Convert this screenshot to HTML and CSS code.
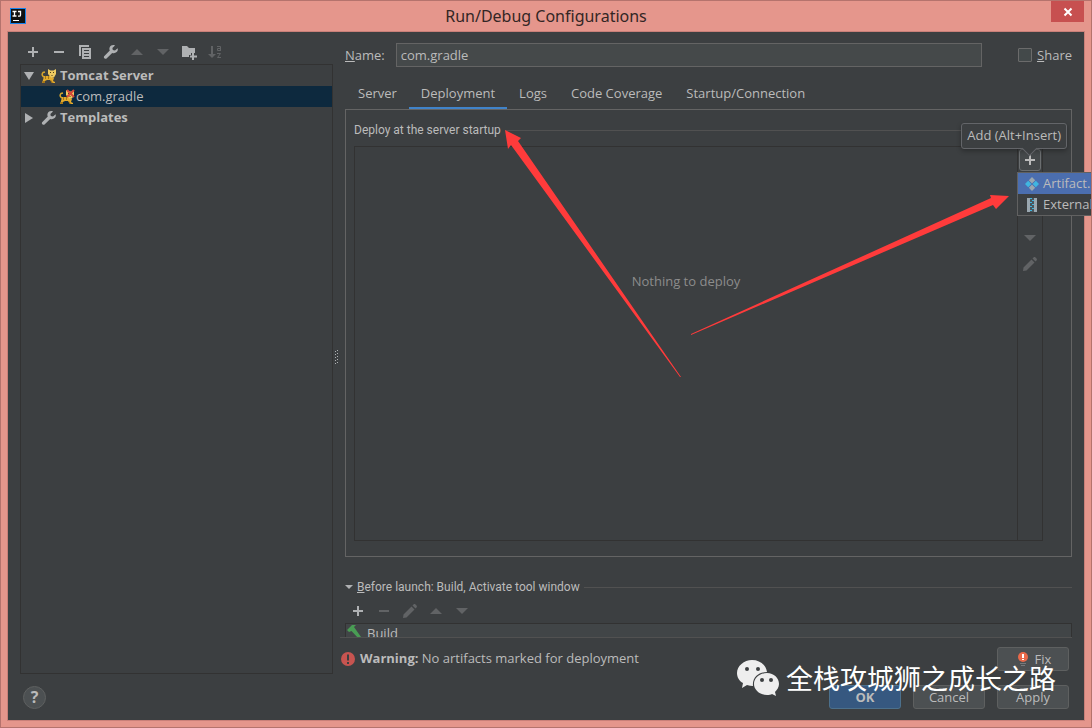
FILE: index.html
```html
<!DOCTYPE html>
<html lang="en">
<head>
    <meta charset="UTF-8">
    <meta name="viewport" content="width=device-width, initial-scale=1.0">
    <title>Run/Debug Configurations</title>
    <link rel="stylesheet" href="styles.css">
</head>
<body>
    <svg class="sprite" aria-hidden="true">
        <symbol id="i-plus" viewBox="0 0 16 16"><path d="M7 3h2v4h4v2H9v4H7V9H3V7h4z"/></symbol>
        <symbol id="i-minus" viewBox="0 0 16 16"><path d="M3 7h10v2H3z"/></symbol>
        <symbol id="i-copy" viewBox="0 0 16 16"><path d="M2 1h10v2H4v9H2z"/><path fill-rule="evenodd" d="M5 4h9v11H5zM7 6v1h5V6zM7 9v1h5V9zM7 12v1h5v-1z"/></symbol>
        <symbol id="i-wrench" viewBox="0 0 16 16"><path d="M14.6 4.2 12 6.6l-2.2-.5-.4-2.1L12 1.4C10 .6 7.600 1.200 6.700 3.200c-.5 1.200-.4 2.400.1 3.400L1.400 12c-.7.7-.7 1.600 0 2.300.7.700 1.700.700 2.400 0l5.400-5.400c1.400.6 3.200.4 4.400-.8 1.200-1.100 1.500-2.600 1-3.900z"/></symbol>
        <symbol id="i-up" viewBox="0 0 16 16"><path d="M2 11 8 5l6 6z"/></symbol>
        <symbol id="i-down" viewBox="0 0 16 16"><path d="M2 5h12l-6 6z"/></symbol>
        <symbol id="i-folder" viewBox="0 0 16 16"><path d="M1 2h5l2 2h6v5h-4v2H8v2H1z"/><path d="M11 9h2v2.500h3v2h-3V16h-2v-2.500H9v-2h2z"/></symbol>
        <symbol id="i-sort" viewBox="0 0 16 16"><path d="M4 2h2v8h3l-4 4-4-4h3z"/><path fill="none" stroke="currentColor" d="M10 2.500h3.500V7M13.500 4.500h-3v2h3M10 9.500h3.500L10.500 13.500H14"/></symbol>
        <symbol id="i-pencil" viewBox="0 0 16 16"><path d="m1 15 .5-3.500 8-8 3 3-8 8zM10.500 2.500l1-1c.6-.6 1.400-.6 2 0l1 1c.6.6.6 1.400 0 2l-1 1z"/></symbol>
        <symbol id="i-cat" viewBox="0 0 16 16">
            <path fill="none" stroke="#d9a62c" stroke-width="1.500" d="M4 9C1 9 .5 6 2 4.500L4 4"/>
            <path fill="#e3ab2d" d="M3 8h6l4 2-1 3 2 1v1h-3l-2-3H6l-2 1-1 2H1l1-3z"/>
            <path fill="#a87716" d="M4 8h1v3H4zM7 8h1v3H7zM2 13h2v2H1zM10 12l2 3h-1l-2-3z"/>
            <path fill="#efca62" d="m7 1 2.500 1.500h3L15 1v5l-2 3.500h-3L7 6z"/>
            <path fill="#51401b" d="M9 4h1v1H9zM12 4h1v1h-1zM10.500 7h1v1h-1z"/>
        </symbol>
    </svg>

    <header class="titlebar">
        <svg class="app-logo" viewBox="0 0 16 16" aria-hidden="true">
            <path fill="#1783ec" d="M0 0h16v16H0z"/><path fill="#111" d="M1 1h14v14H1z"/>
            <path fill="none" stroke="#fff" stroke-width="1.300" d="M2.500 3.500h4M4.500 3v5M2.500 8h4M8 3.500h2.500V7c0 .8-.5 1.200-1.200 1.200H8"/>
            <path fill="#fff" d="M3 12h6v1H3z"/>
        </svg>
        <h1>Run/Debug Configurations</h1>
        <button class="close" aria-label="Close"><svg viewBox="0 0 10 10"><path d="m1.500 1.500 7 7m0-7-7 7"/></svg></button>
    </header>

    <main class="dialog">
        <div class="panes">
            <aside class="sidebar">
                <div class="toolbar">
                    <button aria-label="Add configuration"><svg class="icon"><use href="#i-plus"/></svg></button>
                    <button aria-label="Remove configuration"><svg class="icon"><use href="#i-minus"/></svg></button>
                    <button aria-label="Copy configuration"><svg class="icon"><use href="#i-copy"/></svg></button>
                    <button aria-label="Edit templates"><svg class="icon"><use href="#i-wrench"/></svg></button>
                    <button aria-label="Move up" disabled><svg class="icon"><use href="#i-up"/></svg></button>
                    <button aria-label="Move down" disabled><svg class="icon"><use href="#i-down"/></svg></button>
                    <button aria-label="Create folder"><svg class="icon"><use href="#i-folder"/></svg></button>
                    <button aria-label="Sort" disabled><svg class="icon"><use href="#i-sort"/></svg></button>
                </div>
                <ul class="tree">
                    <li class="node group">
                        <svg class="twisty" viewBox="0 0 10 10"><path d="M0 1h10L5 9z"/></svg>
                        <svg class="icon"><use href="#i-cat"/></svg>
                        <span>Tomcat Server</span>
                    </li>
                    <li class="node child selected">
                        <svg class="icon" viewBox="0 0 16 16"><use href="#i-cat"/><path fill="none" stroke="#d44a3a" stroke-width="2" d="m8 1 7 7m0-7L8 8"/></svg>
                        <span>com.gradle</span>
                    </li>
                    <li class="node group">
                        <svg class="twisty" viewBox="0 0 10 10"><path d="M1 0v10l8-5z"/></svg>
                        <svg class="icon"><use href="#i-wrench"/></svg>
                        <span>Templates</span>
                    </li>
                </ul>
            </aside>

            <div class="splitter"><svg viewBox="0 0 4 16"><path d="M0 1h1v1H0zM2 0h1v1H2zM0 4h1v1H0zM2 3h1v1H2zM0 7h1v1H0zM2 6h1v1H2zM0 10h1v1H0zM2 9h1v1H2zM0 13h1v1H0zM2 12h1v1H2z"/></svg></div>

            <section class="editor">
                <div class="name-row">
                    <label for="name"><u>N</u>ame:</label>
                    <input type="text" id="name" value="com.gradle">
                    <label class="share"><input type="checkbox"><span><u>S</u>hare</span></label>
                </div>

                <nav class="tabs">
                    <button>Server</button>
                    <button class="active">Deployment</button>
                    <button>Logs</button>
                    <button>Code Coverage</button>
                    <button>Startup/Connection</button>
                </nav>

                <div class="tab-page">
                    <h2 class="section-title">Deploy at the server startup</h2>
                    <div class="deploy">
                        <p class="empty">Nothing to deploy</p>
                        <div class="deploy-tools">
                            <div class="add">
                                <button class="add-button" aria-label="Add"><svg class="icon"><use href="#i-plus"/></svg></button>
                                <div class="tooltip" role="tooltip">Add (Alt+Insert)</div>
                                <div class="menu">
                                    <button class="current"><svg class="icon" viewBox="0 0 16 16"><path fill="#9aa7b0" d="m8 1 3.200 3.200L8 7.400 4.800 4.200zM8 8.600l3.200 3.200L8 15l-3.200-3.200z"/><path fill="#40b6e0" d="m4.200 4.800 3.200 3.200-3.200 3.200L1 8zM11.800 4.800 15 8l-3.200 3.200L8.600 8z"/></svg>Artifact...</button>
                                    <button><svg class="icon" viewBox="0 0 16 16"><path fill="#9aa7b0" d="M3 1h3v14H3zM10 1h3v14h-3z"/><path fill="#4a565d" d="M6 1h4v14H6z"/><path fill="#40b6e0" d="M6 1h2v1H6zM8 3h2v1H8zM6 5h2v1H6zM8 7h2v1H8zM6 9h2v1H6zM8 11h2v1H8zM6 13h2v1H6z"/></svg>External</button>
                                </div>
                            </div>
                            <button aria-label="Move down" disabled><svg class="icon"><use href="#i-down"/></svg></button>
                            <button aria-label="Edit" disabled><svg class="icon"><use href="#i-pencil"/></svg></button>
                        </div>
                    </div>
                </div>

                <div class="before-launch">
                    <h2 class="section-title"><svg class="fold" viewBox="0 0 8 6"><path d="M0 1h8L4 5z"/></svg><span><u>B</u>efore launch: Build, Activate tool window</span></h2>
                    <div class="toolbar">
                        <button aria-label="Add task"><svg class="icon"><use href="#i-plus"/></svg></button>
                        <button aria-label="Remove task" disabled><svg class="icon"><use href="#i-minus"/></svg></button>
                        <button aria-label="Edit task" disabled><svg class="icon"><use href="#i-pencil"/></svg></button>
                        <button aria-label="Move task up" disabled><svg class="icon"><use href="#i-up"/></svg></button>
                        <button aria-label="Move task down" disabled><svg class="icon"><use href="#i-down"/></svg></button>
                    </div>
                    <div class="tasks">
                        <svg class="icon" viewBox="0 0 16 16"><path fill="#499c54" d="M1 6 6 1h4L8 3l7 10-2 2-7.500-8L3 8z"/></svg>
                        <span>Build</span>
                    </div>
                </div>

                <div class="status">
                    <svg class="icon" viewBox="0 0 16 16"><circle cx="8" cy="8" r="7" fill="#c75450"/><path fill="#3c3f41" d="M7 3.500h2v6H7zM7 11h2v2H7z"/></svg>
                    <p><b>Warning:</b> No artifacts marked for deployment</p>
                    <button class="btn fix"><svg class="icon" viewBox="0 0 16 16"><circle cx="8" cy="6" r="5" fill="#e8694a"/><path fill="#fff" d="M7 3h2v4H7zM7 8h2v1H7z"/><path fill="#777a7c" d="M5 12h6v1H5zM6 14h4v1H6z"/></svg>Fix</button>
                </div>
            </section>
        </div>

        <footer class="actions">
            <button class="help" aria-label="Help">?</button>
            <button class="btn primary">OK</button>
            <button class="btn">Cancel</button>
            <button class="btn">Apply</button>
        </footer>
    </main>

    <svg class="arrows" viewBox="0 0 1092 728" aria-hidden="true">
        <path d="M505 130 521 138 518 141 681 377 680 377 511 145 508 149z"/>
        <path d="m1009 196-13 13-3-4-302 130v-1l300-136-1-3z"/>
    </svg>

    <div class="watermark">
        <svg viewBox="0 0 42 36" aria-hidden="true">
            <path fill="#eee" fill-rule="evenodd" d="M15 0C7 0 0 6 0 13c0 4 2 8 6 10l-1 5 5-3c2 .6 4 1 6 1C15 17 22 12 30 12 29 5 23 0 15 0zM10 7a2 2 0 1 1 0 4 2 2 0 0 1 0-4zM21 7a2 2 0 1 1 0 4 2 2 0 0 1 0-4z"/>
            <path fill="#eee" fill-rule="evenodd" d="M30 13c-7 0-13 5-13 11s6 11 13 11c2 0 4-.4 5-1l4 2-1-4c2-2 4-5 4-8 0-6-5-11-12-11zM25 18a2 2 0 1 1 0 4 2 2 0 0 1 0-4zM34 18a2 2 0 1 1 0 4 2 2 0 0 1 0-4z"/>
        </svg>
        <span lang="zh-CN">全栈攻城狮之成长之路</span>
    </div>
</body>
</html>
```

FILE: styles.css
```css
* {
    box-sizing: border-box;
}

body {
    margin: 0;
    height: 100vh;
    display: flex;
    flex-direction: column;
    position: relative;
    overflow: hidden;
    padding: 0 7px 7px;
    border: 1px solid #b5736d;
    background: #e5968c;
    color: #bbbbbb;
    font-family: "Open Sans", "Noto Sans CJK SC", sans-serif;
    font-size: 13px;
    line-height: 20px;
}

h1, h2, p, ul {
    margin: 0;
    padding: 0;
    font-weight: normal;
}

button, input {
    font: inherit;
    color: inherit;
}

button {
    padding: 0;
    border: none;
    background: none;
}

.sprite {
    position: absolute;
    width: 0;
    height: 0;
}

.icon {
    display: block;
    flex: none;
    width: 16px;
    height: 16px;
    fill: currentColor;
}

/* title bar */
.titlebar {
    flex: none;
    display: grid;
    grid-template-columns: 48px 1fr 48px;
    height: 31px;
    color: #332625;
}

.app-logo {
    width: 16px;
    margin: 7px 2px;
}

.titlebar h1 {
    font-family: "Noto Sans", sans-serif;
    font-size: 16px;
    line-height: 30px;
    text-align: center;
}

.close {
    display: flex;
    align-items: center;
    justify-content: center;
    width: 33px;
    height: 21px;
    justify-self: end;
    background: #c75050;
}

.close svg {
    width: 10px;
    fill: none;
    stroke: #fff;
    stroke-width: 2;
}

.dialog {
    flex: 1;
    min-height: 0;
    display: flex;
    flex-direction: column;
    padding: 10px 12px;
    background: #3c3f41;
    box-shadow: 0 0 0 1px #c98079;
}

.panes {
    flex: 1;
    min-height: 0;
    display: flex;
}

.toolbar {
    display: flex;
    gap: 10px;
    color: #afb1b3;
}

button:disabled {
    color: #616365;
}

/* configuration tree */
.sidebar {
    flex: none;
    width: 313px;
    display: flex;
    flex-direction: column;
    padding-bottom: 6px;
}

.sidebar .toolbar {
    padding: 2px 5px 4px;
}

.tree {
    flex: 1;
    border: 1px solid #323232;
    list-style: none;
}

.node {
    display: flex;
    align-items: center;
    height: 21px;
    padding-left: 3px;
    line-height: 18px;
}

.node span {
    padding-bottom: 2px;
}

.node .icon {
    color: #afb1b3;
}

.group {
    gap: 3px;
    font-weight: bold;
}

.twisty {
    width: 10px;
    height: 10px;
    margin-right: 4px;
    fill: #afb1b3;
}

.child {
    gap: 1px;
    padding-left: 38px;
}

.selected {
    background: #0d293e;
}

.splitter {
    flex: none;
    display: flex;
    align-items: center;
    justify-content: flex-start;
    width: 12px;
    padding: 0 2px 6px;
}

.splitter svg {
    width: 4px;
    height: 16px;
    fill: #afb1b3;
}

/* editor */
.editor {
    flex: 1;
    min-width: 0;
    display: flex;
    flex-direction: column;
}

.name-row {
    display: flex;
    align-items: center;
    padding-top: 1px;
}

.name-row > input {
    flex: 1;
    min-width: 0;
    height: 24px;
    margin: 0 36px 0 11px;
    padding: 0 4px;
    border: 1px solid #646464;
    background: #45494a;
}

.share {
    display: flex;
    align-items: center;
    gap: 5px;
}

.share input {
    appearance: none;
    width: 14px;
    height: 14px;
    margin: 0;
    border: 1px solid #6b6b6b;
    border-radius: 1px;
    background: #43494a;
}

.tabs {
    display: flex;
    padding: 10px 1px 0;
}

.tabs button {
    height: 32px;
    padding: 2px 12px 0;
    border-bottom: 2px solid transparent;
}

.tabs .active {
    border-bottom-color: #4083c9;
}

.tab-page {
    flex: 1;
    display: flex;
    flex-direction: column;
    padding: 10px 28px 15px 8px;
    border: 1px solid #646464;
}

.section-title {
    display: flex;
    align-items: center;
    gap: 4px;
    font-family: Roboto, sans-serif;
    font-size: 12px;
    line-height: 20px;
}

.section-title::after {
    content: "";
    flex: 1;
    height: 1px;
    background: #515151;
}

.tab-page .section-title {
    margin-right: -20px;
}

.deploy {
    flex: 1;
    display: flex;
    margin-top: 6px;
    border: 1px solid #323232;
}

.empty {
    flex: 1;
    align-self: center;
    padding-bottom: 126px;
    color: #8c8c8c;
    text-align: center;
}

.deploy-tools {
    width: 25px;
    display: flex;
    flex-direction: column;
    align-items: center;
    gap: 10px;
    padding-top: 2px;
    border-left: 1px solid #323232;
}

.add {
    position: relative;
    height: 71px;
}

.add-button {
    display: flex;
    align-items: center;
    justify-content: center;
    width: 22px;
    height: 22px;
    border: 1px solid #6b6e70;
    border-radius: 3px;
    background: #45494b;
}

.tooltip {
    position: absolute;
    right: -26px;
    bottom: 71px;
    z-index: 1;
    padding: 0 5px 2px;
    border: 1px solid #636569;
    border-radius: 3px;
    background: #3c3f41;
    box-shadow: 0 2px 5px rgba(0, 0, 0, 0.3);
    line-height: 22px;
    white-space: nowrap;
}

.tooltip::after {
    content: "";
    position: absolute;
    right: 31px;
    bottom: -6px;
    width: 10px;
    height: 10px;
    border: solid #636569;
    border-width: 0 1px 1px 0;
    background: #3c3f41;
    transform: rotate(45deg);
}

.menu {
    position: absolute;
    top: 23px;
    left: -2px;
    width: 78px;
    border: 1px solid #616161;
    background: #3c3f41;
}

.menu button {
    display: flex;
    align-items: center;
    gap: 3px;
    width: 100%;
    padding-left: 6px;
    line-height: 21px;
    white-space: nowrap;
}

.menu .current {
    background: #4b6eaf;
}

/* before launch */
.before-launch {
    margin-left: -5px;
    padding: 20px 0 0 5px;
    border-bottom: 1px solid #515151;
}

.fold {
    width: 8px;
    height: 6px;
    fill: #afb1b3;
}

.before-launch .toolbar {
    padding: 6px 5px 4px;
}

.tasks {
    display: flex;
    gap: 5px;
    height: 14px;
    overflow: hidden;
    border: 1px solid #323232;
    border-bottom: none;
    background: #414547;
    line-height: 18px;
}

.status {
    display: flex;
    align-items: center;
    gap: 4px;
    height: 42px;
    margin: 0 3px 0 -5px;
}

.status p {
    flex: 1;
    padding-bottom: 2px;
}

/* buttons */
.btn {
    width: 72px;
    height: 24px;
    border: 1px solid #5e6060;
    border-radius: 3px;
    background: #4c5052;
}

.fix {
    display: flex;
    align-items: center;
    justify-content: center;
    gap: 4px;
}

.primary {
    border-color: #4c708c;
    background: #365880;
    font-weight: bold;
}

.actions {
    display: flex;
    align-items: center;
    gap: 12px;
    padding: 5px 3px 1px;
}

.help {
    width: 23px;
    height: 23px;
    margin-right: auto;
    border: 1px solid #5e6060;
    border-radius: 50%;
    background: #4c5052;
    font-size: 16px;
    font-weight: bold;
    line-height: 20px;
}

/* annotations drawn over the window */
.arrows {
    position: absolute;
    inset: -1px;
    fill: #ff3b3b;
    pointer-events: none;
}

.watermark {
    position: absolute;
    right: 35px;
    bottom: 31px;
    z-index: 2;
    display: flex;
    align-items: center;
    gap: 7px;
    color: #fff;
    font-family: "Noto Sans CJK SC", sans-serif;
    font-size: 27px;
    line-height: 36px;
    pointer-events: none;
}

.watermark svg {
    width: 42px;
    height: 36px;
}
```
